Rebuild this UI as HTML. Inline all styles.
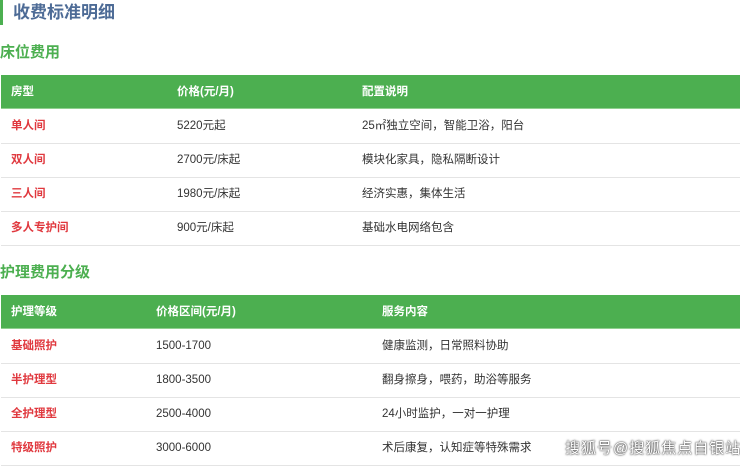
<!DOCTYPE html>
<html><head><meta charset="utf-8"><style>
body{margin:0;width:740px;height:462px;overflow:hidden;background:#fff;font-family:"Liberation Sans","Noto Sans CJK SC",sans-serif;position:relative}
.t{position:absolute;left:0;top:0;height:25px;border-left:3px solid #4caf50;padding-left:10px;font-size:17px;font-weight:bold;color:#4d6b96;line-height:25px}
.h{position:absolute;left:0;font-size:15px;font-weight:bold;color:#4caf50}
.row{position:absolute;left:1px;width:745px;height:34px;border-bottom:1px solid #e4e4e4;font-size:11.5px;color:#333}
.row span{position:absolute;top:0;line-height:34px;white-space:nowrap}
.hd{background:#4caf50;color:#fff;font-weight:bold;border-bottom:1px solid #8fd08f;height:33px}
.r{color:#e0383e;font-weight:bold}
.wm{position:absolute;left:565px;top:437px;font-size:15px;color:#fff;text-shadow:0 0 2px #333,0 0 1px #333;letter-spacing:1px;white-space:nowrap}
</style></head><body>
<div class="t">收费标准明细</div>
<div class="h" style="top:41px">床位费用</div>
<div class="row hd" style="top:75px"><span style="left:10px">房型</span><span style="left:176px">价格(元/月)</span><span style="left:361px">配置说明</span></div>
<div class="row" style="top:109px"><span class="r" style="left:10px">单人间</span><span style="left:176px">5220元起</span><span style="left:361px">25㎡独立空间，智能卫浴，阳台</span></div>
<div class="row" style="top:143px"><span class="r" style="left:10px">双人间</span><span style="left:176px">2700元/床起</span><span style="left:361px">模块化家具，隐私隔断设计</span></div>
<div class="row" style="top:177px"><span class="r" style="left:10px">三人间</span><span style="left:176px">1980元/床起</span><span style="left:361px">经济实惠，集体生活</span></div>
<div class="row" style="top:211px"><span class="r" style="left:10px">多人专护间</span><span style="left:176px">900元/床起</span><span style="left:361px">基础水电网络包含</span></div>
<div class="h" style="top:261px">护理费用分级</div>
<div class="row hd" style="top:295px"><span style="left:10px">护理等级</span><span style="left:155px">价格区间(元/月)</span><span style="left:381px">服务内容</span></div>
<div class="row" style="top:329px"><span class="r" style="left:10px">基础照护</span><span style="left:155px">1500-1700</span><span style="left:381px">健康监测，日常照料协助</span></div>
<div class="row" style="top:363px"><span class="r" style="left:10px">半护理型</span><span style="left:155px">1800-3500</span><span style="left:381px">翻身擦身，喂药，助浴等服务</span></div>
<div class="row" style="top:397px"><span class="r" style="left:10px">全护理型</span><span style="left:155px">2500-4000</span><span style="left:381px">24小时监护，一对一护理</span></div>
<div class="row" style="top:431px"><span class="r" style="left:10px">特级照护</span><span style="left:155px">3000-6000</span><span style="left:381px">术后康复，认知症等特殊需求</span></div>
<div class="wm">搜狐号@搜狐焦点自银站</div>
</body></html>
